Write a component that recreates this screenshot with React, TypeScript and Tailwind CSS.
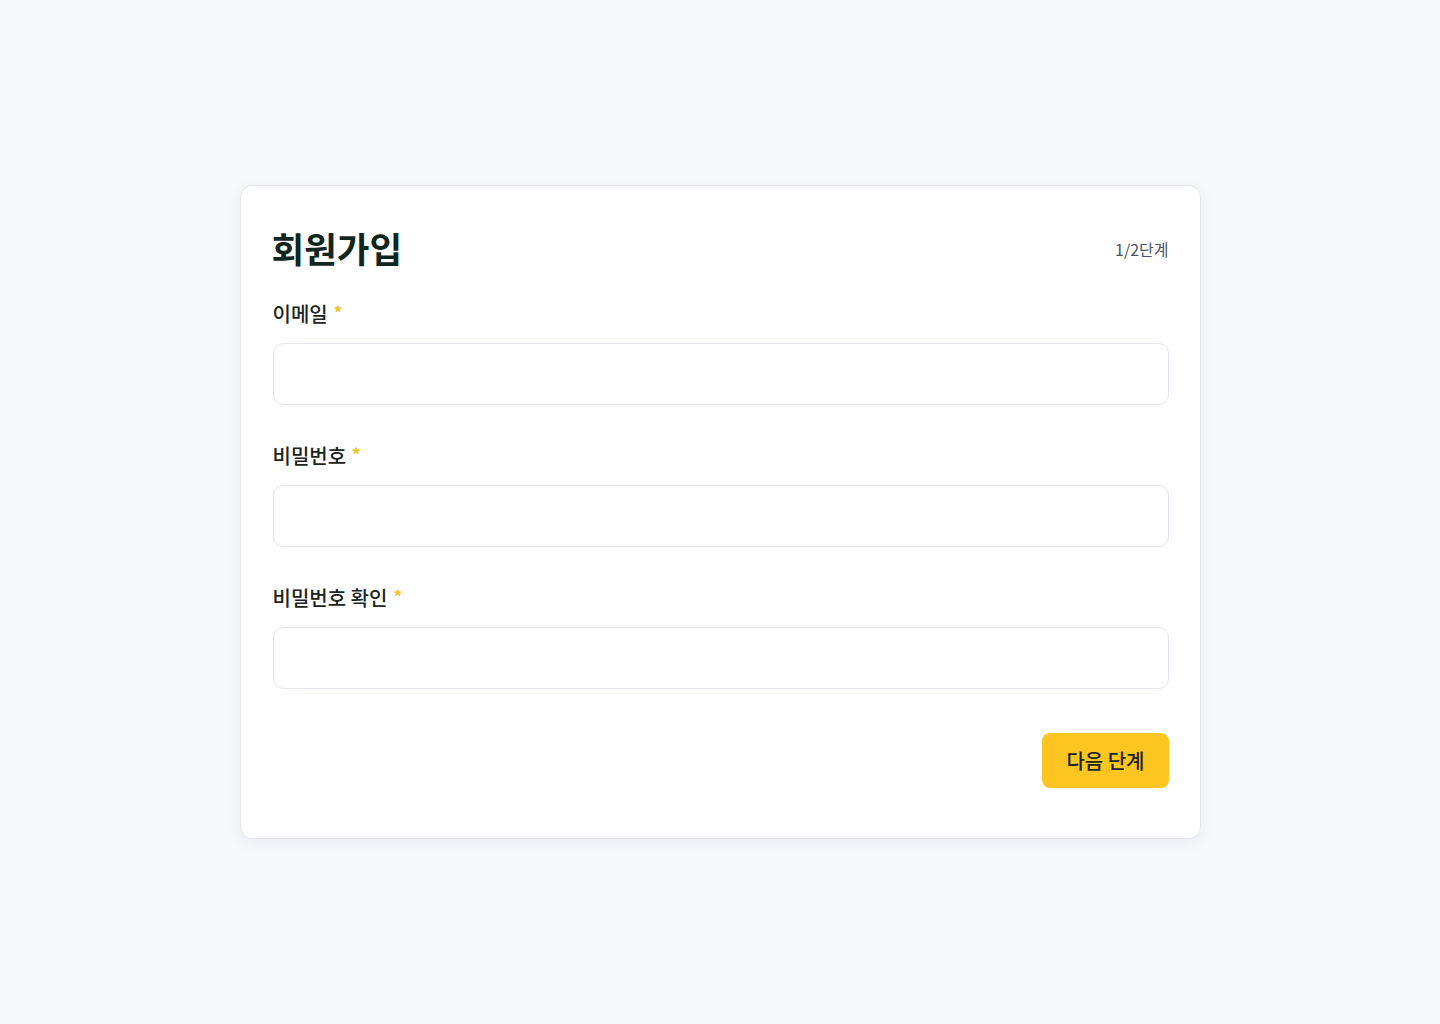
import React from 'react';

const fields = [
  { label: '이메일', type: 'email' },
  { label: '비밀번호', type: 'password' },
  { label: '비밀번호 확인', type: 'password' },
];

export default function App() {
  return (
    <div
      className="min-h-screen w-full bg-[#f7f8fa] flex justify-center pt-[185px]"
      style={{ fontFamily: '"Noto Sans CJK KR", "Noto Sans", sans-serif' }}
    >
      <div className="w-[961px] h-[654px] bg-white border border-[#e3e6eb] rounded-[12px] shadow-[0_4px_16px_rgba(15,23,42,0.05)] pl-[32px] pr-[31px] pt-[40px]">
        {/* Header */}
        <div className="flex items-center justify-between h-[44px] mb-[29px]">
          <h1 className="text-[35.5px] font-bold text-[#10261e] leading-none -ml-[1px]">회원가입</h1>
          <span className="text-[16px] text-[#4b5563] mt-[2px]">1/2단계</span>
        </div>

        {/* Fields */}
        <div className="flex flex-col gap-[36px]">
          {fields.map((f) => (
            <div key={f.label} className="flex flex-col">
              <label className="h-[28px] mb-[16px] pt-[2px] flex items-center text-[20px] font-medium text-[#1a2520] leading-none">
                {f.label}
                <span className="text-[#f9c21f] text-[17px] ml-[6px] -mt-[5px] font-bold">*</span>
              </label>
              <input
                type={f.type}
                className="h-[62px] w-full rounded-[10px] border border-[#e2e6ec] bg-white px-4 text-[16px] outline-none focus:border-[#facc15]"
              />
            </div>
          ))}
        </div>

        {/* Footer */}
        <div className="flex justify-end mt-[44px]">
          <button className="h-[55px] px-[24px] rounded-[8px] bg-[#fcc51f] text-[20px] font-medium text-[#1a2420]">
            다음 단계
          </button>
        </div>
      </div>
    </div>
  );
}
